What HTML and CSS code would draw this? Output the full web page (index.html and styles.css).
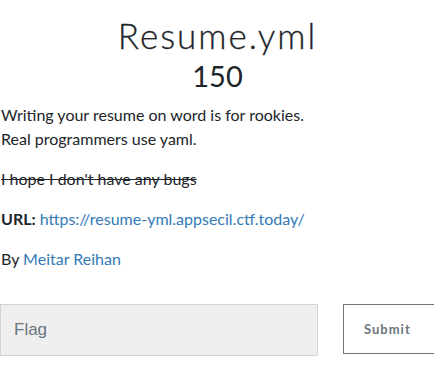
FILE: index.html
```html
<!DOCTYPE html>
<html lang="en">

<head>
	<meta charset="UTF-8">
	<title>Resume.yml</title>

	<link rel="stylesheet" href="styles.css">
</head>

<body>

	<main class="challenge">
		<h2 class="challenge-name">Resume.yml</h2>
		<h3 class="challenge-value">150</h3>

		<div class="challenge-desc">
			<p>Writing your resume on word is for rookies.<br>Real programmers use yaml.</p>
			<p><del>I hope I don't have any bugs</del></p>
			<p><strong>URL:</strong> <a href="#">https://resume-yml.appsecil.ctf.today/</a></p>
			<p>By <a href="#">Meitar Reihan</a></p>
		</div>

		<form class="submit-row">
			<input class="flag-input" type="text" placeholder="Flag">
			<button class="submit-btn" type="button">Submit</button>
		</form>
	</main>

</body>

</html>
```

FILE: styles.css
```css
body {
	margin: 0;
	background-color: #fff;
	color: #212529;
	font-family: "Lato", "Liberation Sans", sans-serif;
	font-size: 16px;
	line-height: 24px;
	overflow: hidden;
}

.challenge {
	padding: 0 0 0 1px;
}

.challenge-name {
	margin: 14px 0 0;
	text-align: center;
	font-family: "Lato", sans-serif;
	font-weight: 300;
	font-size: 35px;
	line-height: 42px;
	letter-spacing: 2px;
	-webkit-text-stroke: 0.3px #212529;
}

.challenge-value {
	margin: 2px 0 0;
	text-align: center;
	font-weight: 400;
	font-size: 29px;
	line-height: 36px;
}

.challenge-desc {
	margin-top: 9px;
}

.challenge-desc p {
	margin: 0 0 16px;
}

a {
	color: #337ab7;
	text-decoration: none;
}

.submit-row {
	display: flex;
	gap: 25px;
	margin-top: 33px;
}

.flag-input {
	box-sizing: border-box;
	flex-shrink: 0;
	width: 318px;
	height: 52px;
	margin: 0 0 0 -1px;
	padding: 0 13px;
	background-color: #efefef;
	border: 1px solid #cdd3d9;
	border-radius: 0;
	font-family: "Liberation Sans", sans-serif;
	font-size: 17px;
	color: #212529;
}

.flag-input::placeholder {
	color: #6c757d;
}

.submit-btn {
	box-sizing: border-box;
	width: 110px;
	height: 50px;
	flex-shrink: 0;
	background-color: #fff;
	border: 1px solid #6c757d;
	border-radius: 0;
	font-family: "Lato", sans-serif;
	font-weight: 700;
	font-size: 13px;
	letter-spacing: 1px;
	color: #6c757d;
	text-align: left;
	padding: 0 0 0 20px;
}
```
